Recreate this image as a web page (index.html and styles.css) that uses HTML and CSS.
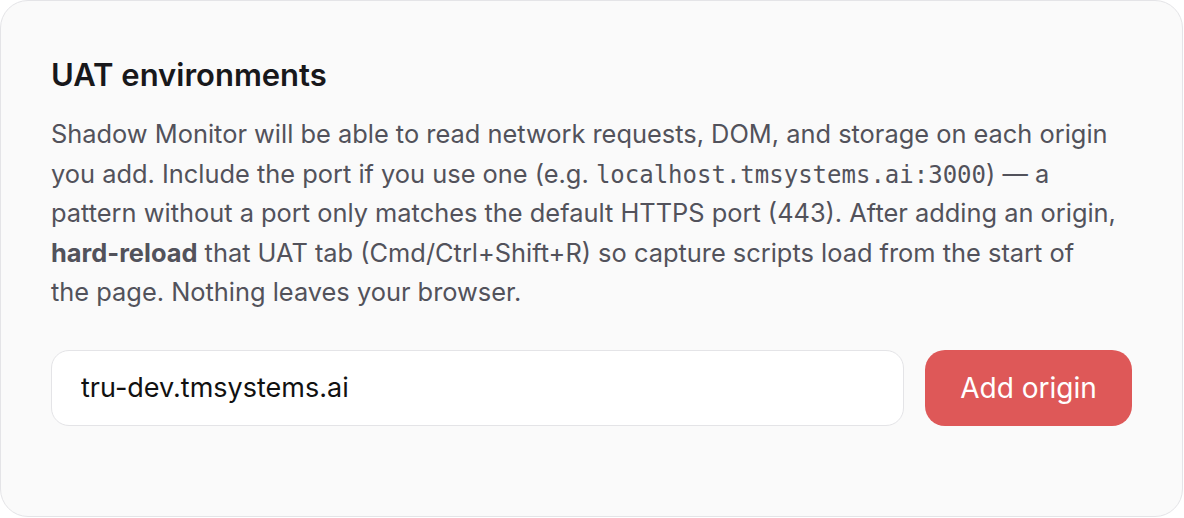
FILE: index.html
```html
<!DOCTYPE html>
<html lang="en">
<head>
  <meta charset="UTF-8" />
  <meta name="viewport" content="width=device-width, initial-scale=1" />
  <title>UAT environments</title>
  <link rel="stylesheet" href="styles.css">
</head>
<body>
  <section class="card">
    <h2 class="card-title">UAT environments</h2>
    <p class="card-text">
      Shadow Monitor will be able to read network requests, DOM, and storage on each origin
      you add. Include the port if you use one (e.g. <code>localhost.tmsystems.ai:3000</code>) — a
      pattern without a port only matches the default HTTPS port (443). After adding an origin,
      <strong>hard-reload</strong> that UAT tab (Cmd/Ctrl+Shift+R) so capture scripts load from the start of
      the page. Nothing leaves your browser.
    </p>

    <form class="origin-form">
      <input type="text" class="origin-input" value="tru-dev.tmsystems.ai" />
      <button type="button" class="origin-add">Add origin</button>
    </form>
  </section>
</body>
</html>
```

FILE: styles.css
```css
body {
  margin: 0;
  background: #ffffff;
  font-family: Inter, "Noto Sans", sans-serif;
}

.card {
  width: 1183px;
  height: 517px;
  box-sizing: border-box;
  padding: 55px 50px 0;
  background: #fafafa;
  border: 1px solid #e4e4e7;
  border-radius: 28px;
}

.card-title {
  margin: 0;
  font-size: 31px;
  font-weight: 600;
  line-height: 38px;
  color: #18181b;
}

.card-text {
  max-width: 1067px;
  margin: 20px 0 0;
  font-size: 25.4px;
  line-height: 39.5px;
  color: #52525b;
}

.card-text code {
  font-family: "DejaVu Sans Mono", monospace;
  font-size: 24px;
  line-height: 1;
}

.card-text strong {
  font-weight: 700;
}

/* input takes the rest of the row, button on the right */
.origin-form {
  display: flex;
  gap: 21px;
  margin-top: 38px;
}

.origin-input {
  flex: 1;
  height: 76px;
  box-sizing: border-box;
  padding: 0 29px;
  font-family: inherit;
  font-size: 27px;
  color: #111111;
  background: #ffffff;
  border: 1.5px solid #e4e4e7;
  border-radius: 18px;
  outline: none;
}

.origin-add {
  width: 207px;
  height: 76px;
  font-family: inherit;
  font-size: 28px;
  color: #ffffff;
  background: #de5858;
  border: none;
  border-radius: 20px;
  cursor: pointer;
}
```
